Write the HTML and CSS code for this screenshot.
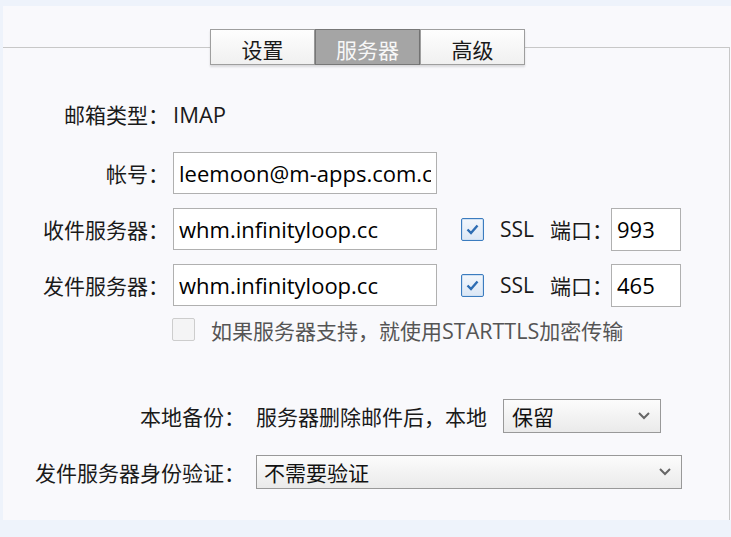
FILE: index.html
```html
<!DOCTYPE html>
<html lang="zh-CN">
<head>
<meta charset="utf-8">
<title>服务器设置</title>
<link rel="stylesheet" href="styles.css">
</head>
<body>
<div class="panel">
  <div class="group">
    <div class="tabs">
      <div class="tab">设置</div>
      <div class="tab active">服务器</div>
      <div class="tab">高级</div>
    </div>
    <div class="form">
      <div class="row row-type">
        <span class="label">邮箱类型：</span><span class="latin">IMAP</span>
      </div>
      <div class="row row-account">
        <span class="label">帐号：</span><input class="field host" value="leemoon@m-apps.com.cn">
      </div>
      <div class="row">
        <span class="label">收件服务器：</span><input class="field host" value="whm.infinityloop.cc">
        <span class="check on"><svg width="21" height="21" viewBox="0 0 21 21"><path d="M5.5 10.5 L9 14 L15.5 6.5" fill="none" stroke="#2d6db3" stroke-width="2.4"/></svg></span>
        <span class="ssl">SSL</span>
        <span class="port-label">端口：</span><input class="field port" value="993">
      </div>
      <div class="row">
        <span class="label">发件服务器：</span><input class="field host" value="whm.infinityloop.cc">
        <span class="check on"><svg width="21" height="21" viewBox="0 0 21 21"><path d="M5.5 10.5 L9 14 L15.5 6.5" fill="none" stroke="#2d6db3" stroke-width="2.4"/></svg></span>
        <span class="ssl">SSL</span>
        <span class="port-label">端口：</span><input class="field port" value="465">
      </div>
      <div class="row row-tls">
        <span class="check off"></span>
        <span class="tls-text">如果服务器支持，就使用<span class="latin-s">STARTTLS</span>加密传输</span>
      </div>
      <div class="row row-backup">
        <span class="label wide">本地备份：</span>
        <span class="note">服务器删除邮件后，本地</span>
        <div class="select small"><span>保留</span><svg width="12" height="8" viewBox="0 0 12 8"><path d="M1 1 L6 6 L11 1" fill="none" stroke="#666" stroke-width="2"/></svg></div>
      </div>
      <div class="row row-auth">
        <span class="label wide">发件服务器身份验证：</span>
        <div class="select big"><span>不需要验证</span><svg width="12" height="8" viewBox="0 0 12 8"><path d="M1 1 L6 6 L11 1" fill="none" stroke="#666" stroke-width="2"/></svg></div>
      </div>
    </div>
  </div>
</div>
</body>
</html>
```
FILE: styles.css
```css
html, body {
  margin: 0;
  padding: 0;
}
body {
  background: #eef3fb;
  width: 731px;
  height: 537px;
  overflow: hidden;
  font-family: "Noto Sans CJK SC", "Noto Sans", sans-serif;
  font-size: 21px;
  color: #1a1a1a;
}
.panel {
  margin: 6px 0 0 3px;
  height: 514px;
  background: #f9f9fc;
  display: flex;
  flex-direction: column;
}
.group {
  margin-top: 41px;
  margin-right: 1px;
  flex: 1;
  border-top: 1px solid #c8c8c8;
  border-right: 1px solid #c8c8c8;
}
.tabs {
  display: flex;
  margin-top: -19px;
  padding-left: 207px;
}
.tab {
  width: 105px;
  height: 36px;
  box-sizing: border-box;
  border: 1px solid #9e9e9e;
  background: linear-gradient(#fefefe, #f0f0f0);
  box-shadow: 0 2px 2px rgba(0, 0, 0, 0.13);
  display: flex;
  align-items: center;
  justify-content: center;
  padding-top: 3px;
  color: #1a1a1a;
}
.tab.active {
  background: #a5a5a5;
  border-color: #777;
  color: #f7f7f7;
}
.form {
  padding-top: 28px;
}
.row {
  display: flex;
  align-items: center;
  height: 42px;
  margin-top: 14px;
}
.row-type {
  margin-top: 0;
}
.row-account {
  margin-top: 17px;
}
.label {
  flex: none;
  width: 166px;
  margin-right: 4px;
  text-align: right;
  white-space: nowrap;
}
.label.wide {
  width: 242px;
  margin-right: 11px;
}
.latin {
  font-family: "Open Sans", sans-serif;
  font-size: 22px;
}
.latin-s {
  font-family: "Open Sans", sans-serif;
  font-size: 21.5px;
}
.field {
  box-sizing: border-box;
  height: 42px;
  margin: 0;
  border: 1px solid #b0b0b0;
  background: #fff;
  padding: 0 5px;
  font-family: "Open Sans", sans-serif;
  font-size: 22px;
  color: #000;
  outline: none;
}
.field.host {
  width: 264px;
}
.field.port {
  width: 70px;
  height: 43px;
}
.check {
  flex: none;
  box-sizing: border-box;
  width: 23px;
  height: 23px;
  border-radius: 2px;
  display: flex;
  align-items: center;
  justify-content: center;
}
.check.on {
  margin-left: 24px;
  border: 1px solid #3b7cbf;
  background: linear-gradient(#f3f7fc, #dbe7f5);
  box-shadow: inset 0 0 0 1px #cfe0f2;
}
.check.off {
  margin-left: 169px;
  border: 1px solid #cdcdcd;
  background: #f4f4f5;
}
.ssl {
  flex: none;
  width: 50px;
  margin-left: 16px;
  font-family: "Open Sans", sans-serif;
  font-size: 21px;
}
.port-label {
  flex: none;
  width: 61px;
  white-space: nowrap;
}
.row-tls {
  height: 23px;
  margin-top: 12px;
}
.tls-text {
  margin-left: 16px;
  color: #555;
  white-space: nowrap;
}
.row-backup {
  height: 34px;
  margin-top: 58px;
}
.row-auth {
  height: 34px;
  margin-top: 22px;
}
.note {
  flex: none;
  width: 247px;
  white-space: nowrap;
}
.select {
  flex: none;
  box-sizing: border-box;
  height: 34px;
  border: 1px solid #999;
  background: linear-gradient(#fcfcfc, #eaeaea);
  display: flex;
  align-items: center;
  justify-content: space-between;
  padding: 0 10px 0 8px;
  color: #111;
}
.select.small {
  width: 158px;
}
.select.big {
  width: 426px;
  padding-left: 7px;
}
```
